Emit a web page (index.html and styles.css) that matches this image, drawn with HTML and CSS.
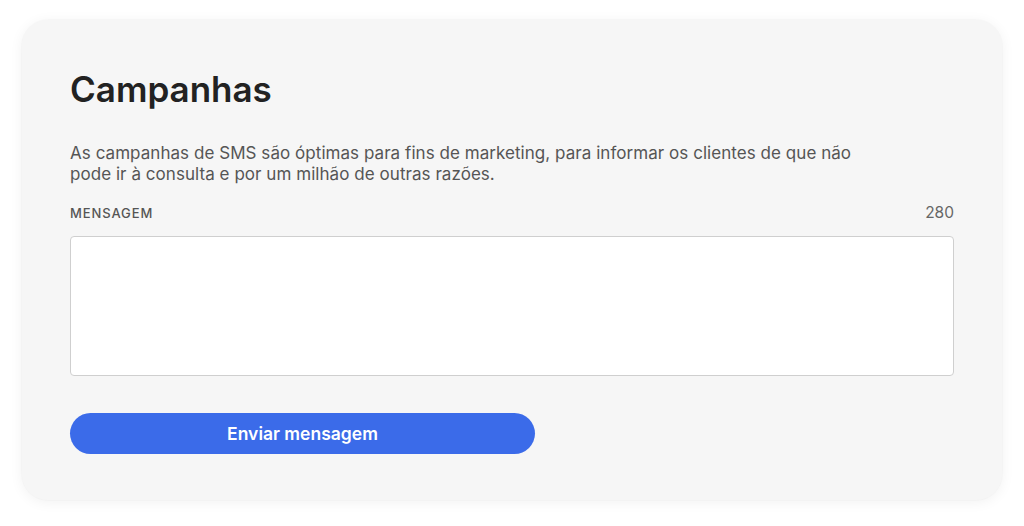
FILE: index.html
```html
<!DOCTYPE html>
<html lang="pt">
<head>
<meta charset="utf-8">
<link rel="stylesheet" href="styles.css">
</head>
<body>
<section class="card">
  <h1 class="title">Campanhas</h1>
  <p class="desc">As campanhas de SMS são óptimas para fins de marketing, para informar os clientes de que não pode ir à consulta e por um milhão de outras razões.</p>
  <div class="field-head">
    <span class="label">MENSAGEM</span>
    <span class="count">280</span>
  </div>
  <textarea class="message"></textarea>
  <button class="send">Enviar mensagem</button>
</section>
</body>
</html>
```

FILE: styles.css
```css
html, body {
  margin: 0;
  padding: 0;
  background: #ffffff;
}
body {
  font-family: Inter, "Noto Sans", sans-serif;
  padding: 20px 22px 26px;
}
.card {
  box-sizing: border-box;
  width: 980px;
  height: 480px;
  background: #f6f6f6;
  border-radius: 26px;
  box-shadow: 0 0 0 1px rgba(0, 0, 0, 0.015), 0 2px 14px rgba(0, 0, 0, 0.06);
  padding: 0 48px;
  display: flex;
  flex-direction: column;
}
.title {
  margin: 49px 0 0;
  font-size: 35px;
  line-height: 40px;
  font-weight: 600;
  color: #222;
  letter-spacing: 0;
}
.desc {
  margin: 34px 0 0;
  width: 800px;
  font-size: 17px;
  line-height: 21.25px;
  letter-spacing: 0.05px;
  color: #555;
}
.field-head {
  margin-top: 18px;
  height: 18px;
  display: flex;
  justify-content: space-between;
  align-items: baseline;
  font-size: 13px;
  line-height: 18px;
  color: #555;
}
.label {
  font-weight: 500;
  letter-spacing: 0.9px;
}
.count {
  font-size: 15.5px;
  color: #666;
}
.message {
  box-sizing: border-box;
  margin-top: 14px;
  width: 884px;
  height: 140px;
  background: #fff;
  border: 1px solid #cfcfcf;
  border-radius: 4px;
  resize: none;
  display: block;
}
.send {
  margin-top: 37px;
  width: 465px;
  height: 41px;
  border: none;
  border-radius: 21px;
  background: #3b6be9;
  color: #fff;
  font-family: Inter, "Noto Sans", sans-serif;
  font-size: 17.5px;
  font-weight: 600;
  padding: 0;
}
```
